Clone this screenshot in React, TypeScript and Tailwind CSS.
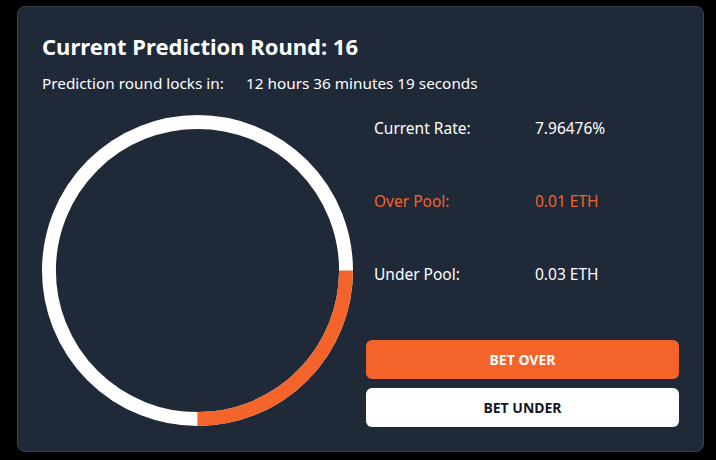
import React from 'react';

const ORANGE = '#f4632a';

const Donut = () => {
  // 25% over pool, drawn from 3 o'clock to 6 o'clock
  const r = 149.5;
  const c = 2 * Math.PI * r;
  return (
    <svg width="313" height="313" viewBox="0 0 313 313" className="block">
      <circle cx="156.5" cy="156.5" r={r} fill="none" stroke="#ffffff" strokeWidth="14" />
      <circle
        cx="156.5"
        cy="156.5"
        r={r}
        fill="none"
        stroke={ORANGE}
        strokeWidth="14"
        strokeDasharray={`${c * 0.25} ${c}`}
      />
    </svg>
  );
};

const StatRow = ({ label, value, accent }: { label: string; value: string; accent?: boolean }) => (
  <div className={`flex items-center h-[22px] text-[15.5px] ${accent ? 'text-[#f4632a]' : 'text-white'}`}>
    <span className="w-[161px]">{label}</span>
    <span>{value}</span>
  </div>
);

export default function App() {
  return (
    <div
      className="w-[716px] h-[460px] bg-black overflow-hidden"
      style={{ fontFamily: '"Noto Sans", "Open Sans", sans-serif' }}
    >
      <div className="ml-[17px] mt-[6px] w-[687px] h-[446px] rounded-lg border border-[#3a4352] bg-[#202938] px-[24px] pt-[24px]">
        <h1 className="text-[22px] leading-[30px] font-bold text-white">
          Current Prediction Round: 16
        </h1>
        <div className="flex mt-[12px] text-[15.3px] leading-[20px] text-white">
          <span className="w-[204px]">Prediction round locks in:</span>
          <span>12 hours 36 minutes 19 seconds</span>
        </div>

        <div className="flex mt-[21px]">
          <Donut />
          <div className="flex flex-col ml-[13px] flex-1">
            <div className="flex flex-col gap-[51px] pl-[8px] pt-[4px]">
              <StatRow label="Current Rate:" value="7.96476%" />
              <StatRow label="Over Pool:" value="0.01 ETH" accent />
              <StatRow label="Under Pool:" value="0.03 ETH" />
            </div>
            <div className="flex flex-col gap-[9px] mt-[54px] w-[313px]">
              <button className="h-[39px] rounded-md bg-[#f4632a] text-white text-[14px] font-bold">
                BET OVER
              </button>
              <button className="h-[39px] rounded-md bg-white text-[#111827] text-[14px] font-bold">
                BET UNDER
              </button>
            </div>
          </div>
        </div>
      </div>
    </div>
  );
}
